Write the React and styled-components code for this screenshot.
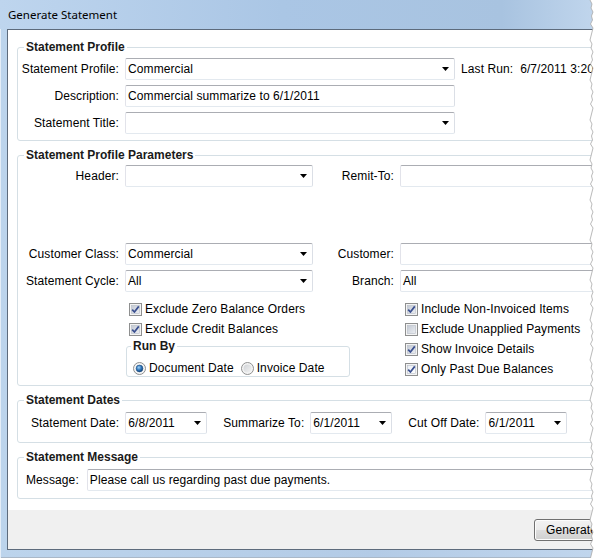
import React from 'react';
import styled, { createGlobalStyle } from 'styled-components';

const GlobalStyle = createGlobalStyle`
  html, body { margin: 0; padding: 0; background: #fff; }
  body {
    font-family: "Liberation Sans", Arial, sans-serif;
    font-size: 12px;
    letter-spacing: 0.1px;
    color: #000;
  }
  * { box-sizing: border-box; }
`;

const Viewport = styled.div`
  position: relative;
  width: 598px;
  height: 558px;
  overflow: hidden;
`;

const Frame = styled.div`
  width: 627px;
  height: 558px;
  display: flex;
  flex-direction: column;
  background: linear-gradient(to right, #bcd4ec, #b3cbe6 60%, #c2d7ee);
  box-shadow: inset 1px 0 #e4edf7, inset 0 -1px #a9b8c8;
`;

const TitleBar = styled.div`
  height: 29px;
  flex: none;
  padding-left: 8px;
  line-height: 30px;
  font-family: "Noto Sans", "Open Sans", sans-serif;
  font-size: 11.5px;
  letter-spacing: 0;
  color: #000;
  background: linear-gradient(to right, #bed5ee 0%, #aac6e5 45%, #a8c3e0 80%, #c9dcf1 100%);
`;

const Client = styled.div`
  flex: 1;
  margin: 0 7px 8px 7px;
  border: 1px solid #5d6b7c;
  background: #fff;
  display: flex;
  flex-direction: column;
`;

const Body = styled.div`
  flex: 1;
  padding: 10px 9px 0 9px;
  display: flex;
  flex-direction: column;
  gap: 7px;
`;

const Group = styled.fieldset`
  margin: 0;
  padding: 0;
  min-width: 0;
  border: 1px solid #d5dfe5;
  border-radius: 3px;
`;

const Legend = styled.legend`
  margin-left: ${p => p.$offset ?? 6}px;
  padding: 0 2px;
  font-weight: bold;
  font-size: 12px;
  line-height: 14px;
  letter-spacing: 0;
  color: #1a1a1a;
`;

const ProfileGrid = styled.div`
  display: grid;
  grid-template-columns: 98px 330px auto;
  column-gap: 6px;
  row-gap: 5px;
  padding: 4px 0 6px 3px;
`;

const ParamGrid = styled.div`
  display: grid;
  grid-template-columns: 98px 188px 75px 1fr;
  column-gap: 6px;
  row-gap: 5px;
  padding: 3px 6px 0 3px;
`;

const Spacer = styled.div`
  grid-column: 1 / -1;
  height: ${p => p.$h}px;
`;

const Label = styled.div`
  align-self: center;
  text-align: right;
  white-space: nowrap;
  line-height: 14px;
`;

const Note = styled.div`
  align-self: center;
  white-space: pre;
  line-height: 14px;
`;

const Field = styled.div`
  height: 22px;
  width: ${p => (p.$w ? `${p.$w}px` : 'auto')};
  flex: ${p => (p.$w ? 'none' : '1')};
  display: flex;
  align-items: center;
  justify-content: space-between;
  padding: 0 5px 0 2px;
  background: #fff;
  border: 1px solid;
  border-color: #abadb3 #dbdfe6 #e3e9ef #e2e3ea;
  border-radius: 2px;
  white-space: nowrap;
  overflow: hidden;
`;

const Arrow = () => (
  <svg width="7" height="4" viewBox="0 0 7 4" style={{ flex: 'none' }}>
    <polygon points="0,0 7,0 3.5,4" fill="#000" />
  </svg>
);

const Combo = ({ value, w }) => (
  <Field $w={w}>
    <span>{value}</span>
    <Arrow />
  </Field>
);

const Checks = styled.div`
  display: flex;
  margin-top: 7px;
  padding: 0 0 6px 107px;
`;

const CheckCol = styled.div`
  display: flex;
  flex-direction: column;
  width: ${p => (p.$w ? `${p.$w}px` : 'auto')};
`;

const CheckRow = styled.div`
  height: 20px;
  display: flex;
  align-items: center;
  gap: 3px;
  padding-left: 4px;
  white-space: nowrap;
`;

const CheckBox = ({ checked, tone = 'gray' }) => {
  const id = `cb-${tone}`;
  const stops =
    tone === 'white'
      ? ['#e9edf3', '#ffffff']
      : ['#c3c9d3', '#eceef2'];
  return (
    <svg width="13" height="13" viewBox="0 0 13 13" style={{ flex: 'none' }}>
      <defs>
        <linearGradient id={id} x1="0" y1="0" x2="1" y2="1">
          <stop offset="0" stopColor={stops[0]} />
          <stop offset="1" stopColor={stops[1]} />
        </linearGradient>
      </defs>
      <rect x="0.5" y="0.5" width="12" height="12" fill="#f4f4f4" stroke="#8e8f8f" />
      <rect x="2.5" y="2.5" width="8" height="8" fill={`url(#${id})`} stroke="#b6bcc6" strokeWidth="0.6" />
      {checked && (
        <path d="M3.2 6.6 L5.4 9 L9.8 3.4" fill="none" stroke="#3a4f8f" strokeWidth="1.7" strokeLinejoin="round" />
      )}
    </svg>
  );
};

const Check = ({ checked, tone, children }) => (
  <CheckRow>
    <CheckBox checked={checked} tone={tone} />
    <span>{children}</span>
  </CheckRow>
);

const RunByGroup = styled(Group)`
  width: 224px;
  margin-left: 1px;
`;

const RadioRow = styled.div`
  height: 16px;
  display: flex;
  align-items: center;
  padding-left: 6px;
  margin-top: 7px;
  white-space: nowrap;
`;

const RadioItem = styled.div`
  display: flex;
  align-items: center;
  gap: 3px;
  margin-right: 7px;
`;

const RadioDot = ({ on }) => (
  <svg width="13" height="13" viewBox="0 0 13 13" style={{ flex: 'none' }}>
    <defs>
      <radialGradient id="rdOn" cx="0.4" cy="0.35" r="0.7">
        <stop offset="0" stopColor="#9fd0f5" />
        <stop offset="0.55" stopColor="#2c73b8" />
        <stop offset="1" stopColor="#0d3a6e" />
      </radialGradient>
      <linearGradient id="rdOff" x1="0" y1="0" x2="1" y2="1">
        <stop offset="0" stopColor="#cfd2d6" />
        <stop offset="1" stopColor="#f3f3f3" />
      </linearGradient>
    </defs>
    <circle cx="6.5" cy="6.5" r="6" fill="#f4f4f4" stroke="#8e8f8f" />
    {on ? (
      <circle cx="6.5" cy="6.5" r="3.4" fill="url(#rdOn)" stroke="#1c4c80" strokeWidth="0.6" />
    ) : (
      <circle cx="6.5" cy="6.5" r="4" fill="url(#rdOff)" />
    )}
  </svg>
);

const DateRow = styled.div`
  display: flex;
  align-items: center;
  gap: 16px;
  padding: 5px 0 8px 13px;
`;

const DatePair = styled.div`
  display: flex;
  align-items: center;
  gap: 6px;
`;

const MessageRow = styled.div`
  display: flex;
  align-items: center;
  gap: 8px;
  padding: 5px 6px 7px 8px;
`;

const Footer = styled.div`
  height: 39px;
  flex: none;
  background: #f0f0f0;
  display: flex;
  justify-content: flex-end;
  align-items: flex-start;
  padding: 9px 10px 0 0;
`;

const Button = styled.div`
  width: 75px;
  height: 22px;
  display: flex;
  align-items: center;
  justify-content: center;
  border: 1px solid #707070;
  border-radius: 3px;
  background: linear-gradient(#f2f2f2 0%, #ebebeb 48%, #dddddd 52%, #cfcfcf 100%);
  box-shadow: inset 0 0 0 1px #fcfcfc;
`;

const TornEdge = styled.svg`
  position: absolute;
  top: 0;
  right: 0;
  width: 10px;
  height: 558px;
`;

const jag = [0, 2, 1, 3, 1.5, 2.5, 0.5, 3, 2, 1];
const edgePoints = Array.from({ length: 141 }, (_, i) => `${2 + jag[i % jag.length]},${i * 4}`);

const Torn = () => (
  <TornEdge viewBox="0 0 10 558">
    <polygon points={`${edgePoints.join(' ')} 10,560 10,0`} fill="#fff" />
    <polyline points={edgePoints.join(' ')} fill="none" stroke="#a8a8a8" strokeWidth="0.8" />
  </TornEdge>
);

export default function App() {
  return (
    <>
      <GlobalStyle />
      <Viewport>
        <Frame>
          <TitleBar>Generate Statement</TitleBar>
          <Client>
            <Body>
              <Group>
                <Legend>Statement Profile</Legend>
                <ProfileGrid>
                  <Label>Statement Profile:</Label>
                  <Combo value="Commercial" />
                  <Note>{'Last Run:  6/7/2011 3:20:15 PM'}</Note>
                  <Label>Description:</Label>
                  <Field>Commercial summarize to 6/1/2011</Field>
                  <div />
                  <Label>Statement Title:</Label>
                  <Combo value="" />
                  <div />
                </ProfileGrid>
              </Group>

              <Group>
                <Legend>Statement Profile Parameters</Legend>
                <ParamGrid>
                  <Label>Header:</Label>
                  <Combo value="" />
                  <Label>Remit-To:</Label>
                  <Field />
                  <Spacer $h={46} />
                  <Label>Customer Class:</Label>
                  <Combo value="Commercial" />
                  <Label>Customer:</Label>
                  <Field />
                  <Label>Statement Cycle:</Label>
                  <Combo value="All" />
                  <Label>Branch:</Label>
                  <Field>All</Field>
                </ParamGrid>
                <Checks>
                  <CheckCol $w={276}>
                    <Check checked>Exclude Zero Balance Orders</Check>
                    <Check checked>Exclude Credit Balances</Check>
                    <RunByGroup>
                      <Legend $offset={4}>Run By</Legend>
                      <RadioRow>
                        <RadioItem>
                          <RadioDot on />
                          <span>Document Date</span>
                        </RadioItem>
                        <RadioItem>
                          <RadioDot />
                          <span>Invoice Date</span>
                        </RadioItem>
                      </RadioRow>
                    </RunByGroup>
                  </CheckCol>
                  <CheckCol>
                    <Check checked>Include Non-Invoiced Items</Check>
                    <Check>Exclude Unapplied Payments</Check>
                    <Check checked>Show Invoice Details</Check>
                    <Check checked tone="white">Only Past Due Balances</Check>
                  </CheckCol>
                </Checks>
              </Group>

              <Group>
                <Legend>Statement Dates</Legend>
                <DateRow>
                  <DatePair>
                    <Label>Statement Date:</Label>
                    <Combo value="6/8/2011" w={82} />
                  </DatePair>
                  <DatePair>
                    <Label>Summarize To:</Label>
                    <Combo value="6/1/2011" w={82} />
                  </DatePair>
                  <DatePair>
                    <Label>Cut Off Date:</Label>
                    <Combo value="6/1/2011" w={82} />
                  </DatePair>
                </DateRow>
              </Group>

              <Group>
                <Legend>Statement Message</Legend>
                <MessageRow>
                  <Label>Message:</Label>
                  <Field>Please call us regarding past due payments.</Field>
                </MessageRow>
              </Group>
            </Body>
            <Footer>
              <Button>Generate</Button>
            </Footer>
          </Client>
        </Frame>
        <Torn />
      </Viewport>
    </>
  );
}
